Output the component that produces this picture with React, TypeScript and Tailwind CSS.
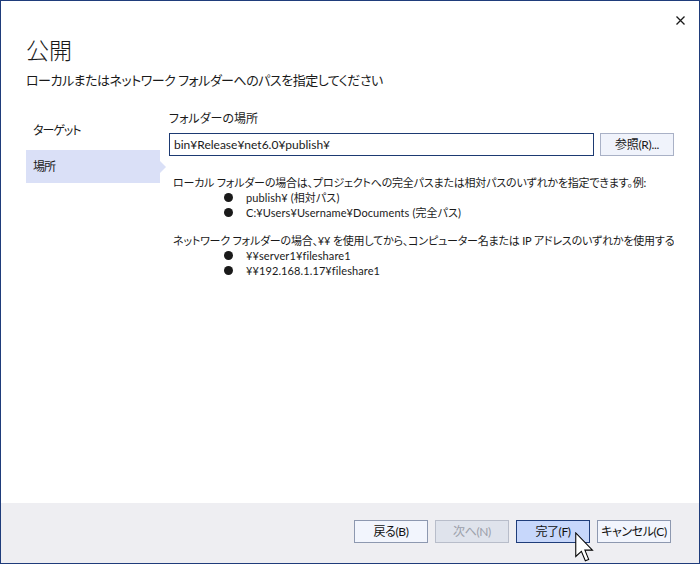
const FONT = "font-['Yu_Gothic_UI','Lato','Noto_Sans_CJK_JP',sans-serif] [font-feature-settings:'palt']"

const localExamples = ['publish¥ (相対パス)', 'C:¥Users¥Username¥Documents (完全パス)']
const networkExamples = ['¥¥server1¥fileshare1', '¥¥192.168.1.17¥fileshare1']

function Bullets({ items }: { items: string[] }) {
  return (
    <ul>
      {items.map((t) => (
        <li key={t} className="flex items-center h-[15px] tracking-[0.1px]">
          <span className="ml-[51px] w-[9px] h-[9px] rounded-full bg-[#1a1a1a]" />
          <span className="ml-[13px]">{t}</span>
        </li>
      ))}
    </ul>
  )
}

function FooterButton({ label, kind }: { label: string; kind?: 'primary' | 'disabled' }) {
  const cls =
    kind === 'primary'
      ? 'bg-[#c7d7fb] border-[#1f3d7a] text-[#111]'
      : kind === 'disabled'
        ? 'bg-[#dfe3ec] border-[#b8bdca] text-[#9ca0aa]'
        : 'bg-[#f2f5fd] border-[#8d98b0] text-[#111]'
  return (
    <button className={`w-[74px] h-[23px] border text-[12px] tracking-[-0.4px] leading-none flex items-center justify-center ${cls}`}>
      {label}
    </button>
  )
}

export default function App() {
  return (
    <div className={`relative w-[700px] h-[564px] border border-[#1f3c7b] bg-white flex flex-col overflow-hidden text-[#1a1a1a] ${FONT}`}>
      {/* close */}
      <svg className="absolute top-[15px] right-[14px]" width="9" height="9" viewBox="0 0 9 9">
        <path d="M0.5 0.5 L8.5 8.5 M8.5 0.5 L0.5 8.5" stroke="#1a1a1a" strokeWidth="1.3" />
      </svg>

      <div className="flex-1 flex flex-col px-[25px]">
        <h1 className="mt-[34px] text-[23px] leading-[30px] font-light">公開</h1>
        <p className="mt-[5px] text-[13px] tracking-[-0.5px] leading-[20px]">ローカルまたはネットワーク フォルダーへのパスを指定してください</p>

        <div className="mt-[21px] flex">
          {/* nav */}
          <div className="w-[134px] pt-[3px] flex flex-col gap-[3px] text-[12px] tracking-[-1px]">
            <div className="h-[33px] flex items-center pl-[7px]">ターゲット</div>
            <div className="relative h-[33px] flex items-center pl-[7px] bg-[#dae0f7]">
              場所
              <span className="absolute left-full top-1/2 -translate-y-1/2 border-y-[6px] border-y-transparent border-l-[6px] border-l-[#dae0f7]" />
            </div>
          </div>

          {/* content */}
          <div className="ml-[9px] flex-1 min-w-0 text-[12px]">
            <div className="leading-[16px]">フォルダーの場所</div>
            <div className="mt-[6px] flex gap-[6px]">
              <div className="flex-1 h-[23px] border border-[#1d3a72] px-[4px] flex items-center">
                bin¥Release¥net6.0¥publish¥
              </div>
              <button className="w-[74px] h-[23px] border border-[#a9b1c6] bg-[#f0f3fb] flex items-center justify-center tracking-[-0.3px]">
                参照(R)...
              </button>
            </div>

            <div className="mt-[19px] px-[4px] text-[11px] tracking-[-0.2px] leading-[15px] whitespace-nowrap overflow-hidden">
              <div>ローカル フォルダーの場合は、プロジェクトへの完全パスまたは相対パスのいずれかを指定できます。例:</div>
              <Bullets items={localExamples} />
            </div>
            <div className="mt-[13px] px-[4px] text-[11px] tracking-[-0.2px] leading-[15px] whitespace-nowrap overflow-hidden">
              <div>ネットワーク フォルダーの場合、¥¥ を使用してから、コンピューター名または IP アドレスのいずれかを使用する必要があります。例:</div>
              <Bullets items={networkExamples} />
            </div>
          </div>
        </div>
      </div>

      {/* footer */}
      <div className="h-[60px] bg-[#eeeef2] flex justify-end items-start gap-[7px] pt-[17px] pr-[28px]">
        <FooterButton label="戻る(B)" />
        <FooterButton label="次へ(N)" kind="disabled" />
        <FooterButton label="完了(F)" kind="primary" />
        <FooterButton label="キャンセル(C)" />
      </div>

      {/* mouse pointer */}
      <svg className="absolute left-[574px] top-[531px]" width="19" height="30" viewBox="0 0 12.5 19.5">
        <path d="M0.5 0.5 L0.5 16 L4.2 12.6 L6.8 18.8 L9 17.9 L6.5 11.8 L11.5 11.8 Z" fill="#fff" stroke="#000" strokeWidth="0.7" strokeLinejoin="miter" />
      </svg>
    </div>
  )
}
